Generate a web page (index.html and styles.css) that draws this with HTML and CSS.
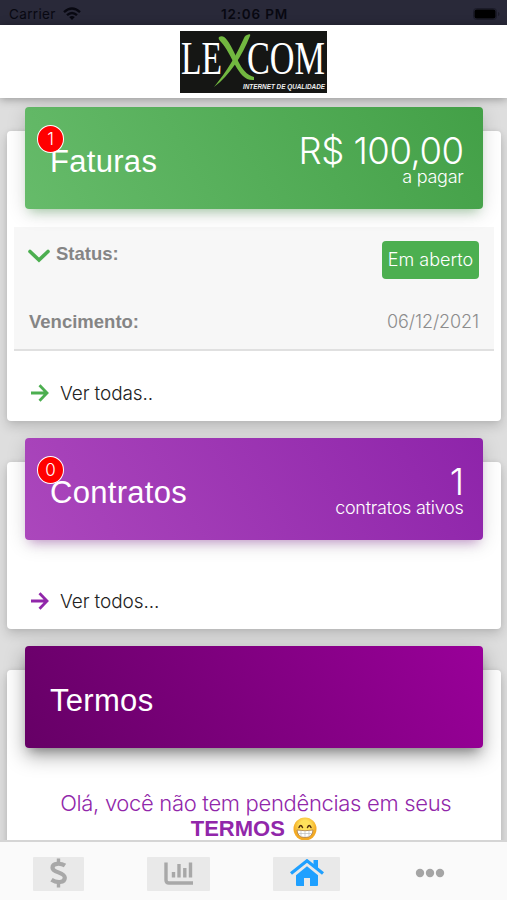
FILE: index.html
```html
<!DOCTYPE html>
<html lang="pt-BR">
<head>
<meta charset="utf-8">
<meta name="viewport" content="width=device-width, initial-scale=1">
<title>Lexcom</title>
<link rel="stylesheet" href="styles.css">
</head>
<body>
<div class="app">
  <div class="status">
    <div class="carrier"><span>Carrier</span>
      <svg width="18" height="13" viewBox="0 0 18 13" fill="none" stroke="#080811" stroke-width="2.4"><path d="M1 5.1Q9-2 17 5.1M4 8.1Q9 3.7 14 8.1"/><path d="M6.2 10.1Q9 7.8 11.8 10.1L9 12.9Z" fill="#080811" stroke="none"/></svg>
    </div>
    <span class="clock">12:06 PM</span>
    <div class="battery"><svg width="27" height="12" viewBox="0 0 27 12"><rect x=".5" y=".5" width="23" height="11" rx="3" fill="none" stroke="#1b1b28"/><rect x="1.500" y="1.500" width="21" height="9" rx="2" fill="#000"/><path d="M25 4v4q1.500-.5 1.500-2T25 4" fill="#1b1b28"/></svg></div>
  </div>
  <header class="header">
    <svg class="logo" width="147" height="62" viewBox="0 0 147 62" role="img" aria-label="Lexcom">
      <rect width="147" height="62" fill="#151614"/>
      <g class="logo-name"><text x="1" y="43" textLength="41" lengthAdjust="spacingAndGlyphs">LE</text><text x="67" y="43" textLength="78" lengthAdjust="spacingAndGlyphs">COM</text></g>
      <path d="M39 6c3-2 6 0 8 3 10 13 12 33 27 37v3c-16 2-22-27-33-38-2-2-3-4-2-5Z" fill="#72b840"/>
      <path d="M67 4c2-1 4-1 3 1C62 25 50 44 34 56 47 40 56 25 64 7c1-2 1-2 3-3Z" fill="#72b840"/>
      <text class="logo-tag" x="63" y="57.500" textLength="82" lengthAdjust="spacingAndGlyphs">INTERNET DE QUALIDADE</text>
    </svg>
  </header>
  <main class="content">
    <section class="card invoices">
      <div class="banner green"><span class="badge">1</span><h2>Faturas</h2><div class="summary"><strong>R$ 100,00</strong><span>a pagar</span></div></div>
      <div class="details">
        <div class="row"><div class="label"><svg width="22" height="14" viewBox="0 0 22 14" fill="none" stroke="#4caf50" stroke-width="3.600" stroke-linecap="round"><path d="m2 2.500 9 8.500 9-8.500"/></svg><b>Status:</b></div><span class="pill">Em aberto</span></div>
        <div class="row due"><b>Vencimento:</b><span class="date">06/12/2021</span></div>
      </div>
      <a class="more"><svg width="18" height="18" viewBox="0 0 18 18" fill="none" stroke="#4caf50" stroke-width="2.800"><path d="M0 9h16M8.500 1.300 16 9l-7.500 7.700"/></svg><span>Ver todas..</span></a>
    </section>
    <section class="card contracts">
      <div class="banner purple"><span class="badge">0</span><h2>Contratos</h2><div class="summary"><strong>1</strong><span>contratos ativos</span></div></div>
      <a class="more"><svg width="18" height="18" viewBox="0 0 18 18" fill="none" stroke="#9127aa" stroke-width="2.800"><path d="M0 9h16M8.500 1.300 16 9l-7.500 7.700"/></svg><span>Ver todos...</span></a>
    </section>
    <section class="card terms">
      <div class="banner dark"><h2>Termos</h2></div>
      <p class="notice"><span class="line">Olá, você não tem pendências em seus</span><span class="line2"><b>TERMOS</b>
        <svg width="24" height="24" viewBox="0 0 24 24" role="img" aria-label="😁"><defs><radialGradient id="face" cy=".35"><stop offset=".45" stop-color="#ffe25b"/><stop offset="1" stop-color="#f3a923"/></radialGradient></defs><circle cx="12" cy="12" r="11.500" fill="url(#face)"/><path d="M6 10.500q1.700-4 3.500 0M14.500 10.500q1.700-4 3.500 0" fill="none" stroke="#54300e" stroke-width="1.500" stroke-linecap="round"/><path d="M4 13q8 1.500 16 0-.5 7.500-8 7.500T4 13Z" fill="#fff" stroke="#a97b45" stroke-width=".8"/><path d="M5 16.500h14M8 13.500v6M12 14v6M16 13.500v6" stroke="#bbb" stroke-width=".7"/></svg></span></p>
    </section>
  </main>
  <nav class="tabs">
    <div class="tab"><span class="tile dollar"><svg width="17" height="30" viewBox="0 0 17 30" fill="none" stroke="#a8a8a8" stroke-width="4.200"><path d="M8.500.5v6M8.500 23.500v6" stroke-width="3.400"/><path d="M15 7.600C11 5 2.500 4.700 2.500 9.700c0 5.400 12.300 4 12.300 10.100 0 5.300-8.200 5.300-13.300 2"/></svg></span></div>
    <div class="tab"><span class="tile chart"><svg width="30" height="23" viewBox="0 0 30 23" fill="none" stroke="#a8a8a8" stroke-width="3.400"><path d="M2 .5V18q0 3 3 3h24"/><path d="M9.500 15.500V10M15 15.500V2M20.800 15.500V6M26.500 15.500V.5"/></svg></span></div>
    <div class="tab"><span class="tile home"><svg width="34" height="28" viewBox="0 0 34 28"><path d="M1 14.500 17 1.800 33 14.500" fill="none" stroke="#1fa0ff" stroke-width="3.200"/><path d="M23.500 1H28v10l-4.500-4ZM17 7.300l11 8.900V26q0 1-1 1h-7v-8h-6v8H7q-1 0-1-1v-9.800Z" fill="#1fa0ff"/></svg></span></div>
    <div class="tab"><svg class="dots" width="30" height="10" viewBox="0 0 30 10" fill="#a5a5a5"><circle cx="5" cy="5" r="4.200"/><circle cx="15" cy="5" r="4.200"/><circle cx="25" cy="5" r="4.200"/></svg></div>
  </nav>
</div>
</body>
</html>
```
FILE: styles.css
```css
* { box-sizing: border-box; }
body { margin: 0; font-family: "Liberation Sans", sans-serif; }
svg { display: block; flex: none; }
.app { width: 507px; height: 900px; overflow: hidden; display: flex; flex-direction: column; background: #dedede; }
.status { height: 25px; flex: none; background: #292939; color: #080811; display: grid; grid-template-columns: 1fr auto 1fr; align-items: center; padding: 2px 7px 0 9px; font-family: Inter, sans-serif; font-size: 13.500px; }
.carrier { display: flex; gap: 7px; align-items: center; letter-spacing: .35px; }
.clock { font-weight: 600; letter-spacing: .8px; }
.battery { display: flex; justify-content: flex-end; }
.header { height: 73px; flex: none; background: #fff; display: flex; justify-content: center; padding-top: 6px; position: relative; z-index: 2; box-shadow: 0 1px 9px rgba(0, 0, 0, .35); }
.logo-name { font-family: "Liberation Serif", serif; font-size: 46px; fill: #fff; }
.logo-tag { font-size: 6.500px; font-style: italic; font-weight: bold; fill: #eee; }
.content { flex: 1; min-height: 0; overflow: hidden; padding: 33px 7px 0; }
.card { width: 493.500px; background: #fff; border-radius: 4px; box-shadow: 0 5px 12px rgba(0, 0, 0, .17), 0 0 5px rgba(0, 0, 0, .06); margin-bottom: 41px; display: flow-root; }
.invoices { height: 290px; }
.contracts { height: 167px; }
.terms { height: 210px; }
.banner { margin: -24px 18px 0; height: 102px; border-radius: 4px; position: relative; display: flex; justify-content: space-between; padding: 0 19px 0 25px; color: #fff; }
.green { background: linear-gradient(60deg, #66bb6a, #43a047); box-shadow: 0 4px 20px rgba(0, 0, 0, .14), 0 7px 10px -5px rgba(76, 175, 80, .4); }
.purple { background: linear-gradient(60deg, #ab47bc, #8e24aa); box-shadow: 0 4px 20px rgba(0, 0, 0, .14), 0 7px 10px -5px rgba(156, 39, 176, .4); }
.dark { background: linear-gradient(60deg, #660066, #990099); box-shadow: 0 8px 20px rgba(0, 0, 0, .34), 0 7px 10px -5px rgba(0, 0, 0, .3); }
.badge { position: absolute; left: 12px; top: 18px; width: 27px; height: 28px; border: 1.500px solid #fff; border-radius: 50%; background: #f00; display: flex; justify-content: center; align-items: center; font: 300 17px/1 Inter, sans-serif; }
h2 { margin: 37px 0 0; font-weight: 400; font-size: 31px; line-height: 36px; letter-spacing: .3px; }
.summary { display: flex; flex-direction: column; align-items: flex-end; padding-top: 29px; font-family: Inter, sans-serif; font-weight: 300; }
.summary strong { font-size: 36.500px; font-weight: 300; line-height: 30px; letter-spacing: -.5px; }
.summary span { font-size: 18px; line-height: 22px; letter-spacing: -.25px; }
.details { width: 480px; height: 124px; margin: 18px 0 0 7px; background: #f7f7f7; border-bottom: 2px solid #e0e0e0; padding: 14px 15px 0; color: #858585; font-size: 18.500px; }
.row { display: flex; justify-content: space-between; align-items: flex-start; height: 66px; }
.label { display: flex; align-items: center; gap: 6px; line-height: 24px; padding-top: 1px; }
.label svg { margin-top: 3px; margin-left: -1px; }
.pill { width: 97px; height: 38px; border-radius: 4px; background: #4caf50; color: #fff; font: 300 18px/38px Inter, sans-serif; text-align: center; }
.due { line-height: 29px; }
.date { color: #8c8c8c; font-family: Inter, sans-serif; font-weight: 300; font-size: 18px; letter-spacing: -.1px; }
.more { display: flex; align-items: center; gap: 11px; height: 24px; padding-left: 24px; color: #222; font: 300 19px/24px Inter, sans-serif; letter-spacing: -.1px; }
.more span { padding-top: 2px; }
.invoices .more { margin-top: 30px; }
.contracts .more { margin-top: 49px; }
.notice { margin: 43px 0 0; color: #9127aa; text-align: center; font-size: 22px; line-height: 25px; }
.line { display: block; font-family: Inter, sans-serif; font-weight: 300; letter-spacing: -.32px; padding-left: 4px; }
.line2 { display: flex; align-items: center; justify-content: center; gap: 8px; }
.tabs { height: 60px; flex: none; background: #fafafa; border-top: 2px solid #d5d5d5; display: grid; grid-template-columns: 116px 125px 131px 1fr; position: relative; z-index: 2; }
.tab { display: flex; justify-content: center; align-items: flex-start; padding-top: 15px; }
.tile { height: 34px; background: #e9e9e9; display: flex; justify-content: center; border-radius: 1px; }
.dollar { width: 51px; padding-top: 1px; }
.chart { width: 63px; padding-top: 5px; }
.home { width: 67px; padding-top: 2px; }
.dots { margin-top: 11px; margin-right: 19px; }
```
